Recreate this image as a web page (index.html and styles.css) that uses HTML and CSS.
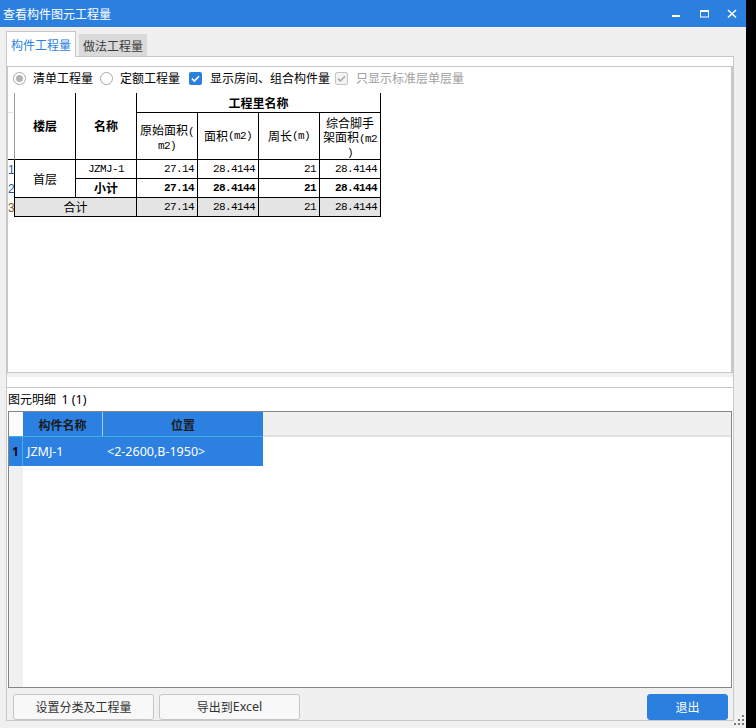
FILE: index.html
```html
<!DOCTYPE html>
<html>
<head>
<meta charset="utf-8">
<link rel="stylesheet" href="styles.css">
</head>
<body>
<div class="window">
  <div class="titlebar">
    <span class="title">查看构件图元工程量</span>
    <svg class="controls" width="80" height="27" viewBox="0 0 80 27">
      <rect x="6" y="15" width="8" height="2" fill="#fff"/>
      <rect x="34.5" y="10.5" width="8" height="6.5" fill="none" stroke="#fff" stroke-width="1"/>
      <rect x="34" y="10" width="9" height="2" fill="#fff"/>
      <path d="M62 10 L70 17.5 M70 10 L62 17.5" stroke="#fff" stroke-width="1.6"/>
    </svg>
  </div>
  <div class="tabs">
    <div class="tab active">构件工程量</div>
    <div class="tab">做法工程量</div>
  </div>
  <div class="pane">
    <div class="top-strip"></div>
    <div class="upper">
      <div class="options">
        <span class="radio checked"></span><span class="opt-text t1">清单工程量</span>
        <span class="radio"></span><span class="opt-text t2">定额工程量</span>
        <span class="check on"><svg width="13" height="13" viewBox="0 0 13 13"><path d="M3 6.6 L5.4 9 L10 4.2" fill="none" stroke="#fff" stroke-width="1.6"/></svg></span><span class="opt-text t3">显示房间、组合构件量</span>
        <span class="check off"><svg width="13" height="13" viewBox="0 0 13 13"><path d="M3 6.6 L5.4 9 L10 4.2" fill="none" stroke="#a6a6a6" stroke-width="1.5"/></svg></span><span class="opt-text t4">只显示标准层单层量</span>
      </div>
      <div class="qtable">
        <div class="c rn rh1"></div>
        <div class="c h b span2">楼层</div>
        <div class="c h b span2">名称</div>
        <div class="c h b wide">工程里名称</div>
        <div class="c rn rh2"></div>
        <div class="c h2 three"><div>原始面积<span class="lat">(</span></div><div><span class="lat">m2)</span></div></div>
        <div class="c h2">面积<span class="lat">(m2)</span></div>
        <div class="c h2">周长<span class="lat">(m)</span></div>
        <div class="c h2 three"><div>综合脚手</div><div>架面积<span class="lat">(m2</span></div><div><span class="lat">)</span></div></div>

        <div class="c rn d n1">1</div>
        <div class="c cn span2">首层</div>
        <div class="c cn lat">JZMJ-1</div>
        <div class="c num lat">27.14</div>
        <div class="c num lat">28.4144</div>
        <div class="c num lat">21</div>
        <div class="c num lat">28.4144</div>

        <div class="c rn d n2">2</div>
        <div class="c cn b">小计</div>
        <div class="c num lat b">27.14</div>
        <div class="c num lat b">28.4144</div>
        <div class="c num lat b">21</div>
        <div class="c num lat b">28.4144</div>

        <div class="c rn d n3">3</div>
        <div class="c cn tot span2c">合计</div>
        <div class="c num lat tot">27.14</div>
        <div class="c num lat tot">28.4144</div>
        <div class="c num lat tot">21</div>
        <div class="c num lat tot">28.4144</div>
      </div>
    </div>
    <div class="splitter"></div>
    <div class="lower-gap"></div>
    <div class="lower">
      <div class="detail-label">图元明细&nbsp;&nbsp;<span class="latin">1 (1)</span></div>
      <div class="dgrid">
        <div class="drow dhead">
          <div class="drh"></div>
          <div class="dc w1 sel hd">构件名称</div>
          <div class="dc w2 sel hd">位置</div>
          <div class="dc rest"></div>
        </div>
        <div class="drow dr1">
          <div class="drh sel">1</div>
          <div class="dc w1 sel txt">JZMJ-1</div>
          <div class="dc w2 sel txt">&lt;2-2600,B-1950&gt;</div>
          <div class="dc rest"></div>
        </div>
        <div class="drow dempty">
          <div class="drh"></div>
          <div class="dc rest"></div>
        </div>
      </div>
    </div>
    <div class="buttons">
      <div class="btn">设置分类及工程量</div>
      <div class="btn second">导出到<span class="latin">Excel</span></div>
      <div class="btn exit">退出</div>
    </div>
  </div>
  <svg class="grip" width="12" height="12" viewBox="0 0 12 12">
    <rect x="8" y="0" width="2" height="2" fill="#7a7a7a"/>
    <rect x="4" y="4" width="2" height="2" fill="#7a7a7a"/>
    <rect x="8" y="4" width="2" height="2" fill="#7a7a7a"/>
    <rect x="0" y="8" width="2" height="2" fill="#7a7a7a"/>
    <rect x="4" y="8" width="2" height="2" fill="#7a7a7a"/>
    <rect x="8" y="8" width="2" height="2" fill="#7a7a7a"/>
  </svg>
</div>
</body>
</html>
```
FILE: styles.css
```css
* { box-sizing: border-box; }
html, body { margin: 0; padding: 0; }
body {
  background: #000;
  width: 756px;
  height: 728px;
  overflow: hidden;
  font-family: "Noto Sans CJK SC", "Noto Sans", sans-serif;
  font-size: 12px;
  color: #000;
}
.window {
  position: relative;
  width: 746px;
  height: 728px;
  background: #f0f0f0;
}
.titlebar {
  height: 27px;
  background: #2b7fdf;
  display: flex;
  align-items: center;
}
.title {
  color: #fff;
  font-size: 12px;
  line-height: 16px;
  padding-left: 3px;
}
.controls { margin-left: auto; display: block; }

.tabs {
  height: 29px;
  padding-left: 6px;
  display: flex;
  align-items: flex-end;
}
.tab {
  font-size: 12px;
  line-height: 16px;
  display: flex;
  align-items: center;
  justify-content: center;
}
.tab.active {
  width: 70px;
  height: 26px;
  margin-bottom: -1px;
  padding-top: 1px;
  background: #fff;
  border: 1px solid #c8c8c8;
  border-bottom: none;
  color: #2b7fdf;
  position: relative;
  z-index: 1;
}
.tab:not(.active) {
  width: 68px;
  height: 22px;
  margin-left: 3px;
  padding-top: 1px;
  background: #dadada;
  color: #3c3c3c;
}

.pane {
  margin-left: 6px;
  width: 728px;
  height: 665px;
  border: 1px solid #c8c8c8;
  background: #f0f0f0;
  display: flex;
  flex-direction: column;
}
.top-strip { height: 9px; background: #fff; flex: none; }
.upper {
  height: 307px;
  flex: none;
  background: #fff;
  border-top: 1px solid #c8c8c8;
  border-left: 1px solid #c8c8c8;
  border-right: 2px solid #c8c8c8;
  border-bottom: 1px solid #c8c8c8;
}
.options {
  height: 22px;
  padding-left: 5px;
  display: flex;
  align-items: center;
}
.radio {
  width: 13px;
  height: 13px;
  border: 1px solid #a9a9a9;
  border-radius: 50%;
  background: #fff;
  flex: none;
  display: flex;
  align-items: center;
  justify-content: center;
}
.radio.checked::after {
  content: "";
  width: 7px;
  height: 7px;
  border-radius: 50%;
  background: #b3b3b3;
}
.check {
  width: 13px;
  height: 13px;
  flex: none;
  border-radius: 2px;
}
.check svg { display: block; }
.check.on { background: #2b7fdf; }
.check.off { background: #f3f3f3; border: 1px solid #c4c4c4; }
.check.off svg { margin: -1px; }
.opt-text { line-height: 16px; white-space: nowrap; }
.radio + .opt-text { margin-left: 7px; }
.check + .opt-text { margin-left: 8px; }
.t1 { margin-right: 7px; }
.t2 { margin-right: 9px; }
.t3 { margin-right: 5px; }
.t4 { color: #a0a0a0; }

.qtable {
  margin-top: 4px;
  display: grid;
  grid-template-columns: 7px repeat(6, 61px);
  grid-template-rows: 20px 47px 19px 19px 19px;
  width: 373px;
  font-family: "Noto Sans CJK SC", sans-serif;
  font-size: 12px;
}
.c {
  border-right: 1px solid #000;
  border-bottom: 1px solid #000;
  display: flex;
  align-items: center;
  justify-content: center;
  line-height: 14px;
  white-space: nowrap;
  overflow: hidden;
}
.c.rn { justify-content: flex-start; }
.c.rh1 { border-right-color: #9a9a9a; border-bottom: 1px solid #e2e2e2; }
.c.rh2 { border-right-color: #9a9a9a; border-bottom-color: #000; }
.c.rn.d {
  border-bottom: none;
  overflow: visible;
  padding-left: 0;
  font-family: "Liberation Sans", sans-serif;
  font-size: 12px;
  line-height: 14px;
}
.n1, .n2 { color: #1d58b0; }
.n3 { color: #7a5a10; }
.c.h { font-weight: bold; font-size: 12px; }
.span2 { grid-row: span 2; }
.span2c { grid-column: span 2; }
.wide { grid-column: span 4; }
.h2.three {
  flex-direction: column;
  padding-top: 1px;
}
.h2.three > div { height: 14px; line-height: 14px; }
.lat {
  font-family: "Liberation Mono", monospace;
  font-size: 11px;
  letter-spacing: -0.6px;
}
.num { justify-content: flex-end; padding-right: 3px; }
.b { font-weight: bold; }
.tot { background: #e4e4e4; }

.splitter { height: 4px; flex: none; background: #f0f0f0; }
.lower-gap { height: 10px; flex: none; background: #fff; }
.lower {
  height: 301px;
  flex: none;
  background: #fff;
  border-top: 1px solid #c8c8c8;
  padding-left: 1px;
}
.detail-label {
  height: 23px;
  line-height: 20px;
  padding-top: 1px;
  font-size: 12px;
  white-space: nowrap;
}
.latin { font-family: "Noto Sans", sans-serif; font-size: 12.5px; }
.dgrid {
  width: 724px;
  height: 277px;
  border: 1px solid #848484;
  display: flex;
  flex-direction: column;
}
.drow { display: flex; flex: none; }
.dhead { height: 24px; }
.dr1 { height: 30px; }
.dempty { flex: 1; }
.drh {
  width: 14px;
  flex: none;
  background: #f0f0f0;
}
.dhead .drh { background: #fbfbfb; }
.dc { flex: none; display: flex; align-items: center; }
.w1 { width: 80px; }
.w2 { width: 160px; }
.rest { flex: 1; }
.dhead .rest { background: #f0f0f0; border-bottom: 1px solid #e2e2e2; }
.sel { background: #2b80e2; }
.hd {
  justify-content: center;
  font-weight: bold;
  color: #1b1b1b;
  font-size: 12px;
}
.dhead .w1 { border-right: 1px solid #a9cbf1; }
.dr1 .sel { border-top: 1px solid #3cb3dc; }
.dr1 .drh {
  border-right: 1px solid #3cb3dc;
  font-family: "Noto Sans", sans-serif;
  font-weight: bold;
  font-size: 12px;
  color: #111;
  display: flex;
  align-items: center;
  padding-left: 3px;
}
.dr1 .rest { border-top: 1px solid #e2e2e2; }
.txt {
  color: #fff;
  font-family: "Noto Sans", sans-serif;
  font-size: 12.5px;
  padding-left: 4px;
}
.dempty .rest { background: #fff; }

.buttons {
  margin-top: 6px;
  height: 26px;
  flex: none;
  display: flex;
  padding-left: 6px;
  padding-right: 5px;
}
.btn {
  width: 141px;
  height: 26px;
  border: 1px solid #c6c6c6;
  border-radius: 3px;
  background: #f8f8f8;
  color: #333;
  display: flex;
  align-items: center;
  justify-content: center;
  font-size: 12px;
  line-height: 16px;
}
.btn.second { margin-left: 5px; }
.btn.exit {
  margin-left: auto;
  width: 81px;
  background: #2b7fdf;
  border-color: #2b7fdf;
  color: #fff;
}
.grip { position: absolute; left: 734px; top: 715px; }
```
